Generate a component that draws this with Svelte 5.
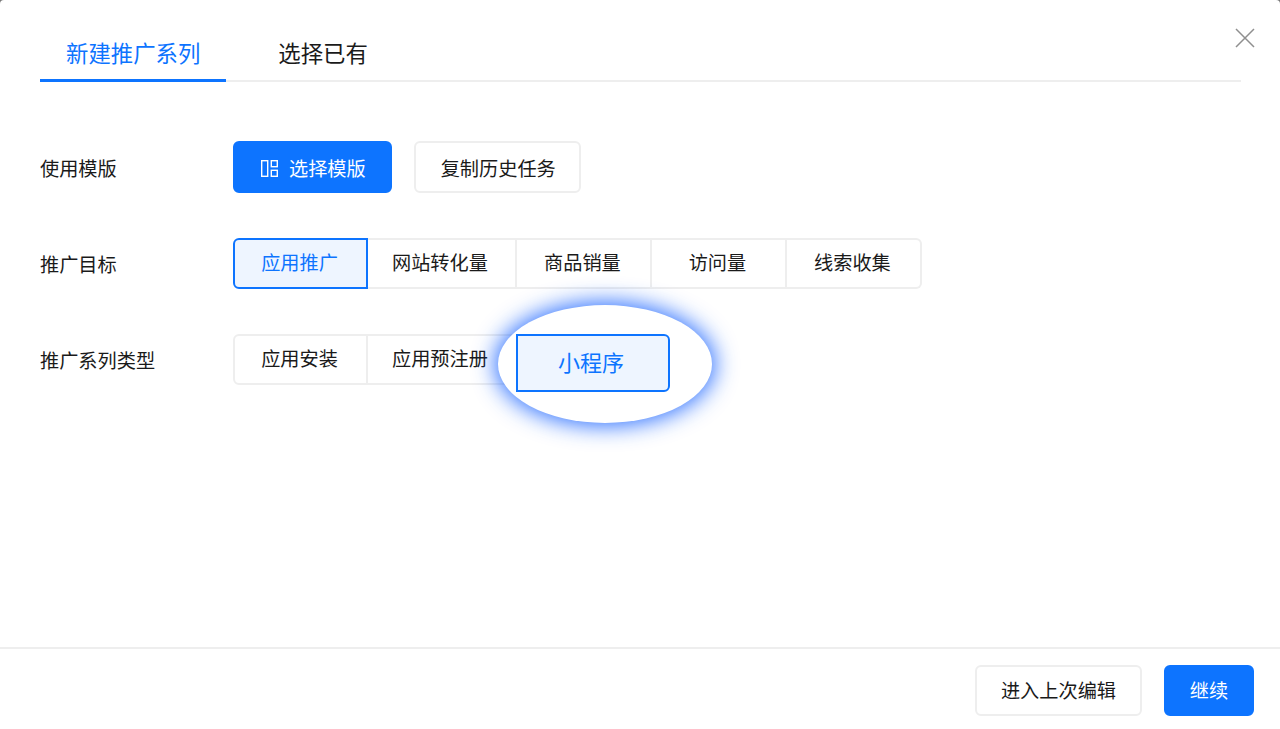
<script>
	const goals = ['应用推广', '网站转化量', '商品销量', '访问量', '线索收集'];
	const kinds = ['应用安装', '应用预注册'];
	let tab = $state(0);
	let goal = $state(0);
</script>

<div class="modal">
	<button class="close" aria-label="关闭">
		<svg width="20" height="20" viewBox="0 0 20 20">
			<path d="M1 1 19 19M19 1 1 19" fill="none" stroke="#8f8f8f" stroke-width="1.5" />
		</svg>
	</button>

	<div class="tabs">
		<button class="tab" class:on={tab === 0} onclick={() => (tab = 0)}>新建推广系列</button>
		<button class="tab" class:on={tab === 1} onclick={() => (tab = 1)}>选择已有</button>
	</div>

	<div class="body">
		<div class="row">
			<span class="label">使用模版</span>
			<div class="actions">
				<button class="btn primary">
					<svg width="17" height="17" viewBox="0 0 17 17" fill="none" stroke="#fff" stroke-width="1.4">
						<rect x="0.7" y="0.7" width="6" height="15.6" />
						<rect x="10.3" y="0.7" width="6" height="6" />
						<rect x="10.3" y="10.3" width="6" height="6" />
					</svg>
					选择模版
				</button>
				<button class="btn wide">复制历史任务</button>
			</div>
		</div>

		<div class="row">
			<span class="label">推广目标</span>
			<div class="group">
				{#each goals as g, i}
					<button class="seg" class:on={goal === i} onclick={() => (goal = i)}>{g}</button>
				{/each}
			</div>
		</div>

		<div class="row">
			<span class="label">推广系列类型</span>
			<div class="group">
				{#each kinds as k}
					<button class="seg">{k}</button>
				{/each}
				<div class="spot">
					<span class="halo"></span>
					<button class="seg on big">小程序</button>
				</div>
			</div>
		</div>
	</div>

	<div class="footer">
		<button class="btn wide">进入上次编辑</button>
		<button class="btn primary">继续</button>
	</div>
</div>

<style>
	:global(body) {
		background: #777;
	}
	.modal {
		position: relative;
		display: flex;
		flex-direction: column;
		height: 729px;
		background: #fff;
		border-radius: 4px 4px 0 0;
		overflow: hidden;
		font-family: 'Liberation Sans', 'Noto Sans CJK SC', sans-serif;
		color: #1a1a1a;
	}
	button {
		font: inherit;
		color: inherit;
		background: none;
		border: none;
		padding: 0;
		white-space: nowrap;
		cursor: pointer;
	}
	.close {
		position: absolute;
		top: 28px;
		right: 25px;
		width: 20px;
		height: 20px;
	}
	.close svg {
		display: block;
	}
	.tabs {
		display: flex;
		gap: 52px;
		margin: 26px 39px 0 40px;
		border-bottom: 2px solid #eee;
	}
	.tab {
		height: 56px;
		margin-bottom: -2px;
		padding: 0 26px 1px;
		font-size: 22.4px;
		border-bottom: 3px solid transparent;
	}
	.tab:last-child {
		padding: 0 0 1px;
	}
	.tab.on {
		color: #0d74ff;
		border-bottom-color: #0d74ff;
	}
	.body {
		flex: 1;
		padding: 59px 40px 0;
	}
	.row {
		display: flex;
		align-items: flex-start;
		margin-bottom: 45px;
	}
	.label {
		box-sizing: border-box;
		width: 193px;
		height: 51px;
		padding-top: 1px;
		line-height: 54px;
		font-size: 19.2px;
	}
	.row:first-child .label {
		padding-top: 2px;
	}
	.actions {
		display: flex;
		gap: 22px;
	}
	.btn {
		display: flex;
		align-items: center;
		justify-content: center;
		gap: 11px;
		height: 52px;
		padding: 2px 26px 0;
		font-size: 19.2px;
		background: #fff;
		border: 2px solid #eee;
		border-radius: 6px;
	}
	.btn.primary {
		padding-left: 26px;
		padding-right: 24px;
		color: #fff;
		background: #0d74ff;
		border-color: #0d74ff;
	}
	.btn.wide {
		width: 167px;
		padding-left: 2px;
		padding-right: 0;
	}
	.group {
		display: flex;
		height: 51px;
	}
	.seg {
		min-width: 135px;
		height: 51px;
		padding: 0 26px 4px 24px;
		font-size: 19.2px;
		background: #fff;
		border: 2px solid #eee;
		border-left-width: 0;
	}
	.seg:first-child {
		padding: 0 27px 4px 25px;
		border-left-width: 2px;
		border-radius: 6px 0 0 6px;
	}
	.seg:nth-child(2) {
		padding-right: 27px;
	}
	.seg:last-child {
		border-radius: 0 6px 6px 0;
	}
	.seg.on {
		color: #0d74ff;
		background: #eef5ff;
		border: 2px solid #0d74ff;
	}
	.spot {
		position: relative;
		z-index: 1;
		margin-left: -1px;
	}
	.halo {
		position: absolute;
		left: -18px;
		top: -29px;
		width: 214px;
		height: 118px;
		background: #fff;
		border-radius: 50%;
		box-shadow: 0 0 22px 3px rgba(13, 90, 255, 0.85);
	}
	.seg.big {
		position: relative;
		width: 154px;
		height: 58px;
		padding: 0 4px 4px 0;
		font-size: 22px;
		border-radius: 0 6px 6px 0;
	}
	.footer {
		display: flex;
		justify-content: flex-end;
		gap: 22px;
		padding: 16px 26px 13px;
		border-top: 2px solid #eee;
	}
	.footer .btn {
		height: 51px;
		padding-top: 0;
		padding-bottom: 1px;
	}
	.footer .wide {
		padding-left: 0;
	}
	.footer .primary {
		width: 90px;
		padding-left: 24px;
		padding-right: 24px;
	}
</style>
